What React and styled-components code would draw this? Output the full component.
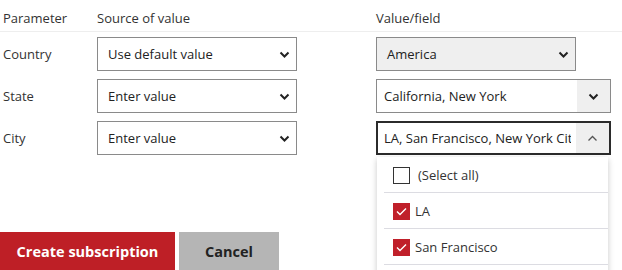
import React from "react";
import styled, { createGlobalStyle } from "styled-components";

const GlobalStyle = createGlobalStyle`
  body {
    margin: 0;
    background: #fff;
    font-family: "Open Sans", "Noto Sans", sans-serif;
    font-size: 13px;
    color: #333;
  }
`;

const Page = styled.div`
  width: 622px;
  height: 270px;
  overflow: hidden;
`;

const HeaderRow = styled.div`
  display: grid;
  grid-template-columns: 97px 279px 1fr;
  height: 31px;
  border-bottom: 1px solid #eeeeee;
`;

const HeaderCell = styled.div`
  display: flex;
  align-items: center;
  padding-top: 4px;
  padding-left: ${(p) => p.$pad || 0}px;
  color: #333;
`;

const Grid = styled.div`
  display: grid;
  grid-template-columns: 97px 279px 1fr;
  grid-auto-rows: 34px;
  row-gap: 8px;
  padding-top: 5px;
`;

const Label = styled.div`
  display: flex;
  align-items: center;
  padding-left: 3px;
  padding-bottom: 1px;
`;

const Select = styled.div`
  box-sizing: border-box;
  width: ${(p) => p.$width}px;
  height: 34px;
  display: flex;
  align-items: center;
  justify-content: space-between;
  padding: 0 6px 0 10px;
  border: 1px solid #8a8a8a;
  background: ${(p) => (p.$disabled ? "#efefef" : "#fff")};
  color: #222;
`;

const ComboWrap = styled.div`
  position: relative;
  width: 235px;
`;

const Combo = styled.div`
  box-sizing: border-box;
  width: 235px;
  height: 34px;
  display: flex;
  border: ${(p) => (p.$open ? "2px solid #2b2b2b" : "1px solid #8a8a8a")};
  background: #fff;
  color: #222;
`;

const ComboText = styled.div`
  flex: 1;
  display: flex;
  align-items: center;
  padding-left: ${(p) => (p.$open ? 6 : 7)}px;
  margin-right: 5px;
  white-space: nowrap;
  overflow: hidden;
`;

const ComboButton = styled.div`
  width: 33px;
  display: flex;
  align-items: center;
  justify-content: center;
  background: #efefef;
`;

const Dropdown = styled.div`
  position: absolute;
  top: 36px;
  left: 1px;
  width: 231px;
  background: #fff;
  box-shadow: 0 2px 6px rgba(0, 0, 0, 0.22);
  z-index: 10;
`;

const Option = styled.div`
  height: 36px;
  display: flex;
  align-items: center;
  padding-left: 16px;
  position: relative;
  &::after {
    content: "";
    position: absolute;
    left: 7px;
    right: 0;
    bottom: 0;
    height: 1px;
    background: #dcdce2;
  }
`;

const Box = styled.div`
  box-sizing: border-box;
  width: 17px;
  height: 17px;
  display: flex;
  align-items: center;
  justify-content: center;
  border: ${(p) => (p.$checked ? "none" : "1.5px solid #333")};
  background: ${(p) => (p.$checked ? "#c0202a" : "#fff")};
  margin-right: ${(p) => (p.$checked ? 5 : 8)}px;
`;

const Actions = styled.div`
  display: flex;
  gap: 4px;
  margin-top: 77px;
`;

const Button = styled.button`
  height: 38px;
  border: none;
  padding: 0;
  width: ${(p) => p.$width}px;
  background: ${(p) => (p.$primary ? "#be1f26" : "#b5b5b5")};
  color: ${(p) => (p.$primary ? "#fff" : "#222")};
  font-family: "Open Sans", "Noto Sans", sans-serif;
  font-size: 14.5px;
  font-weight: 700;
`;

const Chevron = ({ up }) => (
  <svg width="11" height="7" viewBox="0 0 11 7">
    <polyline
      points={up ? "1.5,5.5 5.5,1.5 9.5,5.5" : "1.5,1.5 5.5,5.5 9.5,1.5"}
      fill="none"
      stroke={up ? "#555" : "#222"}
      strokeWidth={up ? 1.3 : 2}
    />
  </svg>
);

const Check = () => (
  <svg width="11" height="9" viewBox="0 0 11 9">
    <polyline points="1,4.5 4,7.5 10,1.5" fill="none" stroke="#fff" strokeWidth="1.4" />
  </svg>
);

const options = [
  { label: "(Select all)", checked: false },
  { label: "LA", checked: true },
  { label: "San Francisco", checked: true },
  { label: "New York City", checked: true },
];

export default function App() {
  return (
    <Page>
      <GlobalStyle />
      <HeaderRow>
        <HeaderCell $pad={3}>Parameter</HeaderCell>
        <HeaderCell>Source of value</HeaderCell>
        <HeaderCell>Value/field</HeaderCell>
      </HeaderRow>
      <Grid>
        <Label>Country</Label>
        <Select $width={200}>
          Use default value
          <Chevron />
        </Select>
        <Select $width={200} $disabled>
          America
          <Chevron />
        </Select>

        <Label>State</Label>
        <Select $width={200}>
          Enter value
          <Chevron />
        </Select>
        <Combo>
          <ComboText>California, New York</ComboText>
          <ComboButton>
            <Chevron />
          </ComboButton>
        </Combo>

        <Label>City</Label>
        <Select $width={200}>
          Enter value
          <Chevron />
        </Select>
        <ComboWrap>
          <Combo $open>
            <ComboText $open>LA, San Francisco, New York City</ComboText>
            <ComboButton>
              <Chevron up />
            </ComboButton>
          </Combo>
          <Dropdown>
            {options.map((o) => (
              <Option key={o.label}>
                <Box $checked={o.checked}>{o.checked && <Check />}</Box>
                {o.label}
              </Option>
            ))}
          </Dropdown>
        </ComboWrap>
      </Grid>
      <Actions>
        <Button $primary $width={175}>Create subscription</Button>
        <Button $width={100}>Cancel</Button>
      </Actions>
    </Page>
  );
}
